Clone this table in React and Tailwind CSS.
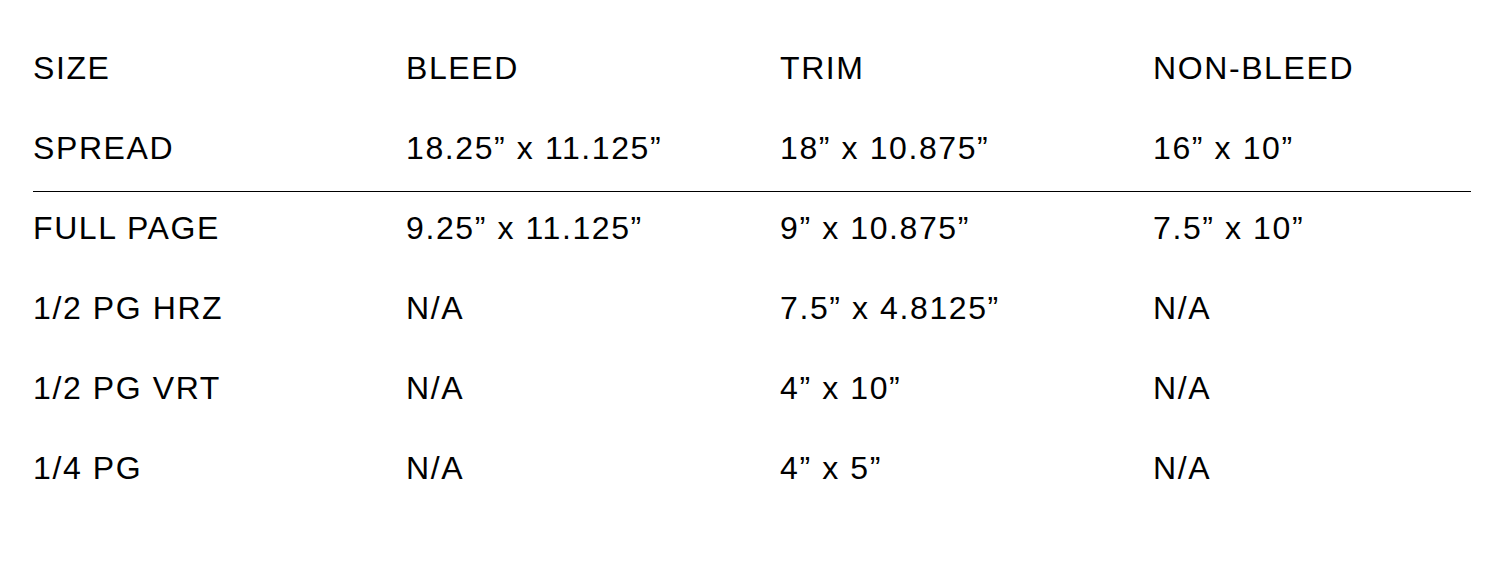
const rows = [
  ["SIZE", "BLEED", "TRIM", "NON-BLEED"],
  ["SPREAD", "18.25” x 11.125”", "18” x 10.875”", "16” x 10”"],
  ["FULL PAGE", "9.25” x 11.125”", "9” x 10.875”", "7.5” x 10”"],
  ["1/2 PG HRZ", "N/A", "7.5” x 4.8125”", "N/A"],
  ["1/2 PG VRT", "N/A", "4” x 10”", "N/A"],
  ["1/4 PG", "N/A", "4” x 5”", "N/A"],
];

function Row({ cells, className = "" }) {
  return (
    <div className={`grid grid-cols-[373px_374px_373px_1fr] h-20 items-center ${className}`}>
      {cells.map((c, i) => (
        <div key={i} className="leading-[80px]">
          {c}
        </div>
      ))}
    </div>
  );
}

export default function App() {
  return (
    <div
      className="w-[1501px] h-[582px] bg-white text-black pt-[28px] pl-[33px] pr-[30px] text-[32px] tracking-[0.05em]"
      style={{ fontFamily: '"Liberation Sans", Arial, sans-serif' }}
    >
      <Row cells={rows[0]} />
      <Row cells={rows[1]} className="h-[84px] items-start border-b border-black" />
      <Row cells={rows[2]} className="-mt-1" />
      {rows.slice(3).map((r, i) => (
        <Row key={i} cells={r} />
      ))}
    </div>
  );
}
